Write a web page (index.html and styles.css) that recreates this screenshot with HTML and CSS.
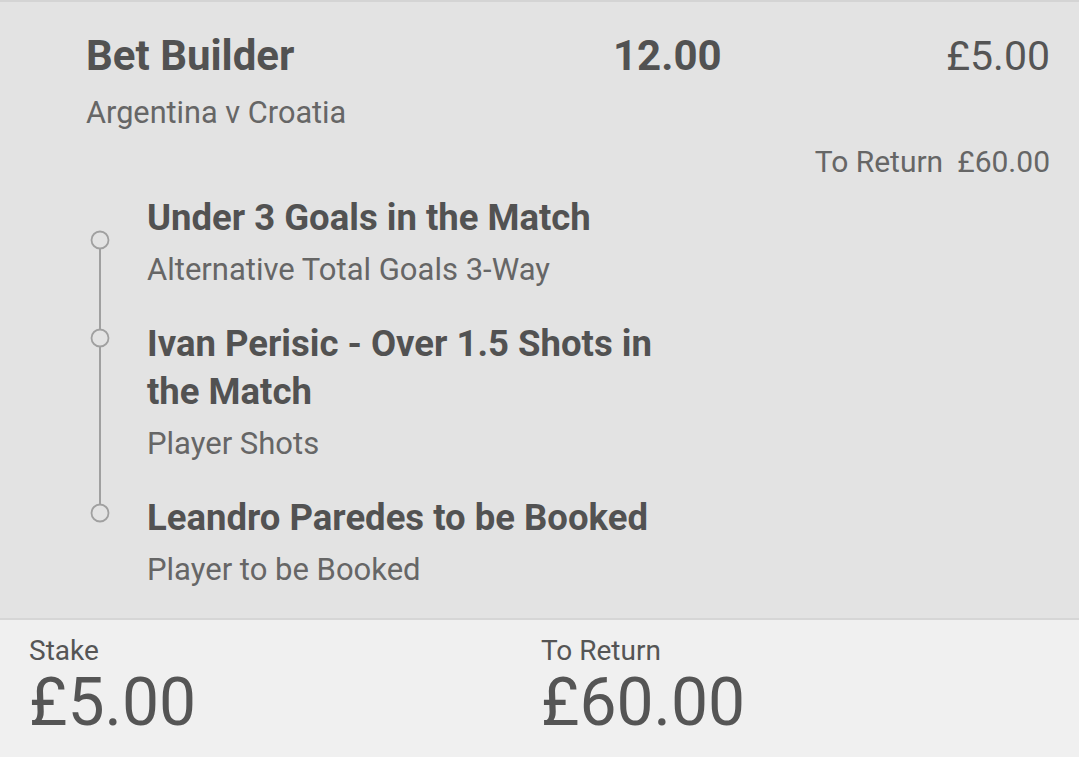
FILE: index.html
```html
<!DOCTYPE html>
<html lang="en">
<head>
<meta charset="utf-8">
<title>Bet Builder</title>
<link rel="stylesheet" href="styles.css">
</head>
<body>
<section class="bet">
  <div class="bet-head">
    <div class="bet-name">
      <h1 class="bet-title">Bet Builder</h1>
      <p class="bet-event">Argentina v Croatia</p>
    </div>
    <div class="bet-odds">12.00</div>
    <div class="bet-stake">£5.00</div>
  </div>
  <div class="bet-return">
    <span>To Return</span>
    <span>£60.00</span>
  </div>
  <div class="legs">
    <svg class="timeline" width="30" height="340" viewBox="0 0 30 340" aria-hidden="true">
      <line x1="14" y1="47" x2="14" y2="320" stroke="#a0a0a0" stroke-width="2"/>
      <circle cx="14" cy="47" r="8.5" fill="#e3e3e3" stroke="#a0a0a0" stroke-width="1.8"/>
      <circle cx="14" cy="145" r="8.5" fill="#e3e3e3" stroke="#a0a0a0" stroke-width="1.8"/>
      <circle cx="14" cy="320" r="8.5" fill="#e3e3e3" stroke="#a0a0a0" stroke-width="1.8"/>
    </svg>
    <div class="leg">
      <div class="leg-title">Under 3 Goals in the Match</div>
      <div class="leg-market">Alternative Total Goals 3-Way</div>
    </div>
    <div class="leg">
      <div class="leg-title">Ivan Perisic - Over 1.5 Shots in the Match</div>
      <div class="leg-market">Player Shots</div>
    </div>
    <div class="leg">
      <div class="leg-title">Leandro Paredes to be Booked</div>
      <div class="leg-market">Player to be Booked</div>
    </div>
  </div>
</section>
<section class="summary">
  <div class="summary-item">
    <div class="summary-label">Stake</div>
    <div class="summary-value">£5.00</div>
  </div>
  <div class="summary-item">
    <div class="summary-label">To Return</div>
    <div class="summary-value">£60.00</div>
  </div>
</section>
</body>
</html>
```
FILE: styles.css
```css
html, body {
  margin: 0;
  padding: 0;
}
body {
  font-family: Roboto, "Liberation Sans", sans-serif;
  color: #555555;
  background: #f0f0f0;
  width: 1079px;
  height: 757px;
  overflow: hidden;
}
.bet {
  background: #e3e3e3;
  border-top: 2px solid #d4d4d4;
  padding: 30px 29px 30px 86px;
}
.bet-head {
  display: flex;
  align-items: flex-start;
}
.bet-name {
  width: 527px;
}
.bet-title {
  margin: 0;
  font-size: 42px;
  line-height: 48px;
  font-weight: 700;
  color: #525252;
}
.bet-event {
  margin: 15px 0 0;
  font-size: 30.7px;
  line-height: 36px;
  color: #666666;
}
.bet-odds {
  font-size: 42px;
  line-height: 48px;
  font-weight: 700;
  color: #525252;
}
.bet-stake {
  margin-left: auto;
  font-size: 41px;
  line-height: 48px;
  color: #555555;
}
.bet-return {
  display: flex;
  justify-content: flex-end;
  gap: 14px;
  margin-top: 13px;
  font-size: 30px;
  line-height: 36px;
  color: #666666;
}
.legs {
  position: relative;
  margin-top: 14px;
  padding-left: 61px;
  display: flex;
  flex-direction: column;
  gap: 32px;
}
.timeline {
  position: absolute;
  left: 0;
  top: -1px;
}
.leg {
  width: 540px;
}
.leg-title {
  font-size: 36.5px;
  line-height: 48px;
  font-weight: 700;
  color: #525252;
}
.leg-market {
  margin-top: 10px;
  font-size: 31px;
  line-height: 36px;
  color: #666666;
}
.summary {
  border-top: 2px solid #d6d6d6;
  background: #f0f0f0;
  display: grid;
  grid-template-columns: 512px 1fr;
  padding: 15px 29px 0;
}
.summary-label {
  font-size: 28px;
  line-height: 32px;
  color: #555555;
}
.summary-value {
  margin-top: 0;
  font-size: 66px;
  line-height: 72px;
  color: #555555;
}
```
